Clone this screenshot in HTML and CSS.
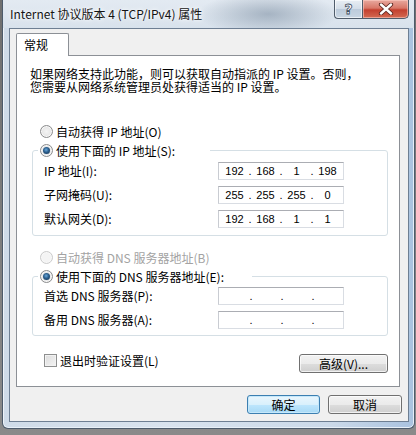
FILE: index.html
```html
<!DOCTYPE html>
<html lang="zh-CN">
<head>
<meta charset="utf-8">
<title>Internet 协议版本 4 (TCP/IPv4) 属性</title>
<link rel="stylesheet" href="styles.css">
</head>
<body>
<div class="window">
  <div class="titlebar">
    <span class="title">Internet 协议版本 4 (TCP/IPv4) 属性</span>
    <div class="caption-btns">
      <div class="cbtn help"><span>?</span></div>
      <div class="cbtn close">
        <svg width="16" height="12" viewBox="0 0 16 12"><path d="M3 1.5 L13 10.5 M13 1.5 L3 10.5" stroke="#5a2620" stroke-width="4.2" stroke-linecap="round"/><path d="M3 1.5 L13 10.5 M13 1.5 L3 10.5" stroke="#ffffff" stroke-width="2.4" stroke-linecap="round"/></svg>
      </div>
    </div>
  </div>
  <div class="client">
    <div class="tabs"><div class="tab">常规</div></div>
    <div class="panel">
      <p class="intro">如果网络支持此功能，则可以获取自动指派的 IP 设置。否则，<br>您需要从网络系统管理员处获得适当的 IP 设置。</p>
      <div class="opt first"><span class="radio"></span><span>自动获得 IP 地址(O)</span></div>
      <fieldset class="group g1">
        <legend class="lg1"><span class="radio checked"></span><span>使用下面的 IP 地址(S):</span></legend>
        <div class="grid g1grid">
          <span class="lbl">IP 地址(I):</span>
          <div class="ipbox"><span class="seg">192</span><span class="dot">.</span><span class="seg">168</span><span class="dot">.</span><span class="seg">1</span><span class="dot">.</span><span class="seg">198</span></div>
          <span class="lbl">子网掩码(U):</span>
          <div class="ipbox"><span class="seg">255</span><span class="dot">.</span><span class="seg">255</span><span class="dot">.</span><span class="seg">255</span><span class="dot">.</span><span class="seg">0</span></div>
          <span class="lbl">默认网关(D):</span>
          <div class="ipbox"><span class="seg">192</span><span class="dot">.</span><span class="seg">168</span><span class="dot">.</span><span class="seg">1</span><span class="dot">.</span><span class="seg">1</span></div>
        </div>
      </fieldset>
      <div class="opt dns-auto disabled"><span class="radio dis"></span><span>自动获得 DNS 服务器地址(B)</span></div>
      <fieldset class="group g2">
        <legend class="lg2"><span class="radio checked"></span><span>使用下面的 DNS 服务器地址(E):</span></legend>
        <div class="grid g2grid">
          <span class="lbl">首选 DNS 服务器(P):</span>
          <div class="ipbox"><span class="seg"></span><span class="dot">.</span><span class="seg"></span><span class="dot">.</span><span class="seg"></span><span class="dot">.</span><span class="seg"></span></div>
          <span class="lbl">备用 DNS 服务器(A):</span>
          <div class="ipbox"><span class="seg"></span><span class="dot">.</span><span class="seg"></span><span class="dot">.</span><span class="seg"></span><span class="dot">.</span><span class="seg"></span></div>
        </div>
      </fieldset>
      <div class="bottom-row">
        <div class="check"><span class="checkbox"></span><span>退出时验证设置(L)</span></div>
        <div class="btn adv">高级(V)...</div>
      </div>
    </div>
    <div class="buttons">
      <div class="btn ok">确定</div>
      <div class="btn cancel">取消</div>
    </div>
  </div>
</div>
</body>
</html>
```

FILE: styles.css
```css
* { box-sizing: border-box; }
html, body { margin: 0; padding: 0; }
body {
  width: 416px;
  height: 435px;
  overflow: hidden;
  background: linear-gradient(180deg, #6f6f6f 0%, #8a8a8a 100%);
  font-family: "Noto Sans CJK SC", "Noto Sans", sans-serif;
  font-size: 12px;
  color: #000;
}
.window {
  margin-left: 2px;
  width: 413px;
  height: 429px;
  border: 1px solid #4d5b6b;
  border-top: none;
  border-radius: 0 0 6px 6px;
  background: linear-gradient(90deg, #cfdbe8 0%, #d9e3ee 40%, #cbd9e9 80%, #a9c2df 100%);
  box-shadow: inset 1px 0 0 #eef3f8, inset -1px 0 0 #e6eef7, inset 0 -1px 0 #e8f0f8;
}
.titlebar {
  height: 28px;
  display: flex;
  align-items: flex-start;
  padding-left: 7px;
  padding-right: 5px;
  background:
    radial-gradient(ellipse 70px 22px at 265px 14px, rgba(120,138,158,0.55), rgba(120,138,158,0) 100%),
    linear-gradient(180deg, #e3eaf2 0%, #d8e2ec 100%);
}
.title {
  margin-top: 5px;
  line-height: 18px;
  font-size: 12px;
  color: #141414;
  white-space: nowrap;
  text-shadow: 0 0 6px #ffffff, 0 0 3px #ffffff;
}
.caption-btns {
  margin-left: auto;
  display: flex;
  height: 19px;
}
.cbtn {
  height: 19px;
  border: 1px solid #4f5c6b;
  border-top: none;
  display: flex;
  align-items: center;
  justify-content: center;
}
.help {
  width: 28px;
  border-right: none;
  border-radius: 0 0 0 4px;
  background: linear-gradient(180deg, #e8eef4 0%, #d3dde8 50%, #bccbdb 51%, #c9d6e3 100%);
  box-shadow: inset 0 0 0 1px rgba(255,255,255,0.6);
}
.help span {
  font-family: "DejaVu Sans", sans-serif;
  font-weight: bold;
  font-size: 14px;
  line-height: 14px;
  color: #ffffff;
  -webkit-text-stroke: 0.8px #3d4d5e;
  margin-top: -1px;
}
.close {
  width: 47px;
  border-radius: 0 0 5px 0;
  background: linear-gradient(180deg, #e8a99f 0%, #d87768 45%, #c3402f 55%, #d36a52 100%);
  box-shadow: inset 0 0 0 1px rgba(255,210,200,0.55);
}
.client {
  margin: 0 5px 0 6px;
  width: 400px;
  height: 394px;
  border: 1px solid #6e7f93;
  background: #f0f0f0;
  padding: 4px 8px 0 6px;
}
.tabs { display: flex; height: 22px; }
.tab {
  position: relative;
  z-index: 1;
  width: 53px;
  height: 23px;
  border: 1px solid #8c9096;
  border-bottom: none;
  border-radius: 2px 2px 0 0;
  background: #ffffff;
  padding-left: 7px;
  line-height: 22px;
  font-size: 12px;
}
.panel {
  width: 384px;
  height: 332px;
  border: 1px solid #8c9096;
  background: #ffffff;
  display: flex;
  flex-direction: column;
}
.intro {
  margin: 11px 0 0 13px;
  font-size: 12px;
  line-height: 13px;
  white-space: nowrap;
}
.opt {
  display: flex;
  align-items: center;
  gap: 3px;
  height: 16px;
  margin-left: 23px;
  white-space: nowrap;
}
.opt.first { margin-top: 30px; }
.opt.dns-auto { margin-top: 13px; }
.disabled { color: #a3a3a3; }
.radio {
  flex: none;
  width: 13px;
  height: 13px;
  border-radius: 50%;
  border: 1px solid #8b8c8d;
  background: radial-gradient(circle at 50% 50%, #f4f4f4 0%, #e6e6e6 60%, #d4d4d4 100%);
  box-shadow: inset 0 0 0 1px #f8f8f8;
  position: relative;
}
.radio.dis {
  border-color: #cbcbcb;
  background: #f4f4f4;
}
.radio.checked::after {
  content: "";
  position: absolute;
  left: 2px;
  top: 2px;
  width: 7px;
  height: 7px;
  border-radius: 50%;
  background: radial-gradient(circle at 45% 40%, #6aa9dc 0%, #2a5c8a 45%, #15324f 100%);
}
.group {
  margin: 3px 0 0 15px;
  padding: 0;
  width: 356px;
  border: 1px solid #d5dfe5;
  border-radius: 3px;
  min-width: 0;
}
.group legend {
  margin-left: 5px;
  padding: 0 2px;
  height: 16px;
  display: flex;
  align-items: center;
  gap: 3px;
  white-space: nowrap;
}
.lg1 { width: 172px; }
.lg2 { width: 214px; }
.grid {
  display: grid;
  grid-template-columns: 174px 126px;
  grid-auto-rows: 18px;
  row-gap: 6px;
  padding-left: 11px;
  align-items: center;
}
.g1grid { padding-top: 4px; padding-bottom: 7px; }
.g2grid { padding-top: 3px; padding-bottom: 6px; }
.lbl { white-space: nowrap; line-height: 18px; }
.ipbox {
  height: 18px;
  border: 1px solid #d9dde3;
  border-top-color: #abadb3;
  border-left-color: #c9ccd2;
  background: #ffffff;
  display: flex;
  align-items: center;
  padding-left: 3px;
  font-family: "Liberation Sans", Arial, sans-serif;
  font-size: 11px;
  color: #000;
}
.seg {
  width: 25px;
  text-align: center;
  line-height: 16px;
}
.dot {
  width: 6px;
  text-align: center;
  line-height: 16px;
}
.g2grid .dot { padding-left: 2px; }
.bottom-row {
  margin-top: 18px;
  display: flex;
  align-items: flex-start;
  padding-left: 27px;
  padding-right: 11px;
}
.check {
  display: flex;
  align-items: center;
  gap: 3px;
  height: 13px;
  margin-top: 0;
  white-space: nowrap;
}
.checkbox {
  width: 13px;
  height: 13px;
  border: 1px solid #8e8f8f;
  background: linear-gradient(135deg, #dcdcdc 0%, #f4f4f4 100%);
  box-shadow: inset 0 0 0 1px #f2f2f2;
}
.btn {
  height: 19px;
  border: 1px solid #707070;
  border-radius: 3px;
  background: linear-gradient(180deg, #f2f2f2 0%, #ebebeb 50%, #dddddd 51%, #cfcfcf 100%);
  box-shadow: inset 0 0 0 1px rgba(255,255,255,0.7);
  display: flex;
  align-items: center;
  justify-content: center;
  font-size: 12px;
  line-height: 17px;
  white-space: nowrap;
}
.adv {
  margin-left: auto;
  width: 89px;
}
.buttons {
  display: flex;
  justify-content: flex-end;
  gap: 8px;
  margin-top: 8px;
  padding-right: 0;
  margin-right: -2px;
}
.ok {
  width: 73px;
  border-color: #3c7fb1;
  background: linear-gradient(180deg, #eaf6fd 0%, #d9f0fc 50%, #bee6fd 51%, #a7d9f5 100%);
  box-shadow: inset 0 0 0 1px #c5e8fb;
}
.cancel { width: 74px; }
```
